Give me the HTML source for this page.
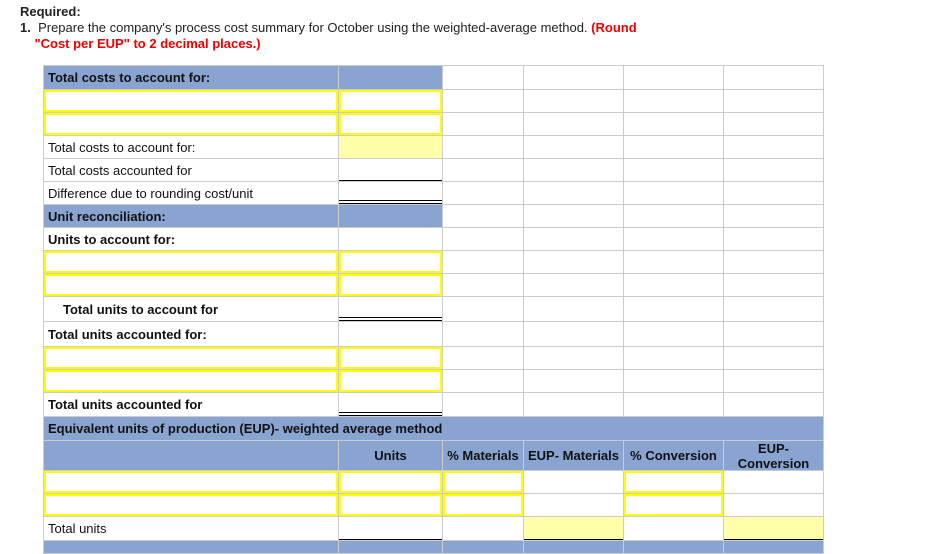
<!DOCTYPE html>
<html><head><meta charset="utf-8"><style>
body{margin:0;background:#fff;font-family:"Liberation Sans",Arial,sans-serif;width:928px;height:546px;overflow:hidden;position:relative}
.req{position:absolute;left:20px;top:4px;font-size:13px;line-height:16px;color:#222}
.red{color:#e00;font-weight:bold}
.g{position:absolute;left:43px;top:65px;display:grid;grid-template-columns:294px 103px 80px 99px 99px 99px;grid-template-rows:23px 22px 22px 22px 22px 22px 22px 22px 22px 22px 24px 24px 22px 22px 23px 23px 29px 22px 22px 23px 12px;gap:1px;padding:1px;background:#ccc}
.g>div{background:#fff;font-size:13px;color:#111;display:flex;align-items:center;padding-left:4px;white-space:nowrap}
.b{background:#8aa4d2!important;font-weight:bold}
.y{box-shadow:inset 0 0 0 2px #ff0}
.f{background:#ffffaa!important}
.k{box-shadow:inset 0 -1px 0 #000}
.yk{box-shadow:inset 0 0 0 2px #ff0,inset 0 -1px 0 #000}
.fk{background:#ffffaa!important;box-shadow:inset 0 -1px 0 #000}
.d{box-shadow:inset 0 -1px 0 #000,inset 0 -3px 0 #fff,inset 0 -4px 0 #000}
.bo{font-weight:bold}
.c{justify-content:center;text-align:center;padding-left:0!important;line-height:15px}
.s{grid-column:span 6}
</style></head><body>
<div class="req"><b>Required:</b><br><b>1.</b>&nbsp; Prepare the company's process cost summary for October using the weighted-average method. <span class="red">(Round</span><br>&nbsp;&nbsp;&nbsp;&nbsp;<span class="red">"Cost per EUP" to 2 decimal places.)</span></div>
<div class="g">
<div class="b">Total costs to account for:</div><div class="b"></div><div></div><div></div><div></div><div></div>
<div class="y"></div><div class="y"></div><div></div><div></div><div></div><div></div>
<div class="y"></div><div class="yk"></div><div></div><div></div><div></div><div></div>
<div>Total costs to account for:</div><div class="f"></div><div></div><div></div><div></div><div></div>
<div>Total costs accounted for</div><div class="k"></div><div></div><div></div><div></div><div></div>
<div>Difference due to rounding cost/unit</div><div class="d"></div><div></div><div></div><div></div><div></div>
<div class="b">Unit reconciliation:</div><div class="b"></div><div></div><div></div><div></div><div></div>
<div class="bo">Units to account for:</div><div></div><div></div><div></div><div></div><div></div>
<div class="y"></div><div class="y"></div><div></div><div></div><div></div><div></div>
<div class="y"></div><div class="y"></div><div></div><div></div><div></div><div></div>
<div class="bo" style="padding-left:19px">Total units to account for</div><div class="d"></div><div></div><div></div><div></div><div></div>
<div class="bo">Total units accounted for:</div><div></div><div></div><div></div><div></div><div></div>
<div class="y"></div><div class="y"></div><div></div><div></div><div></div><div></div>
<div class="y"></div><div class="yk"></div><div></div><div></div><div></div><div></div>
<div class="bo">Total units accounted for</div><div class="d"></div><div></div><div></div><div></div><div></div>
<div class="b s">Equivalent units of production (EUP)- weighted average method</div>
<div class="b"></div><div class="b c">Units</div><div class="b c">% Materials</div><div class="b c">EUP- Materials</div><div class="b c">% Conversion</div><div class="b c">EUP-<br>Conversion</div>
<div class="y"></div><div class="y"></div><div class="y"></div><div></div><div class="y"></div><div></div>
<div class="y"></div><div class="yk"></div><div class="y"></div><div></div><div class="y"></div><div></div>
<div>Total units</div><div class="k"></div><div></div><div class="fk"></div><div></div><div class="fk"></div>
<div class="b"></div><div class="b"></div><div class="b"></div><div class="b"></div><div class="b"></div><div class="b"></div>
</div>
</body></html>
